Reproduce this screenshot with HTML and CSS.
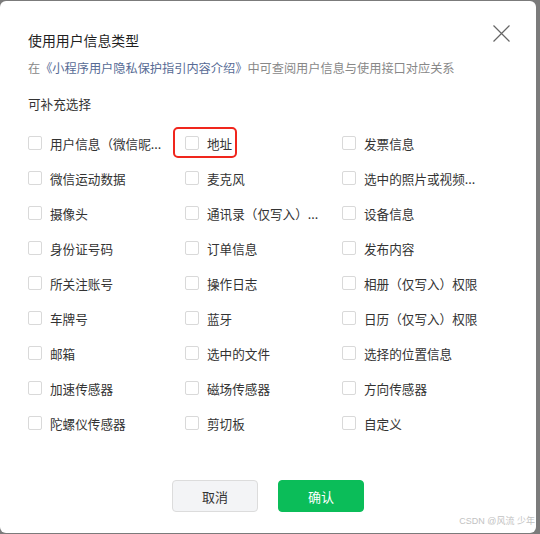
FILE: index.html
```html
<!DOCTYPE html>
<html lang="zh-CN">
<head>
<meta charset="utf-8">
<title>使用用户信息类型</title>
<link rel="stylesheet" href="styles.css">
</head>
<body>
<div class="dialog">
  <div class="title">使用用户信息类型</div>
  <button class="close" aria-label="关闭">
    <svg width="17" height="17" viewBox="0 0 17 17"><path d="M0.5 0.5L16.5 16.5M16.5 0.5L0.5 16.5" stroke="#666" stroke-width="1.2" fill="none"/></svg>
  </button>
  <div class="desc">在<span class="link">《小程序用户隐私保护指引内容介绍》</span>中可查阅用户信息与使用接口对应关系</div>
  <div class="label">可补充选择</div>
  <div class="grid">
    <div class="item"><span class="box"></span><span class="text">用户信息（微信昵...</span></div>
    <div class="item"><span class="box"></span><span class="text">地址</span><span class="mark"></span></div>
    <div class="item"><span class="box"></span><span class="text">发票信息</span></div>
    <div class="item"><span class="box"></span><span class="text">微信运动数据</span></div>
    <div class="item"><span class="box"></span><span class="text">麦克风</span></div>
    <div class="item"><span class="box"></span><span class="text">选中的照片或视频...</span></div>
    <div class="item"><span class="box"></span><span class="text">摄像头</span></div>
    <div class="item"><span class="box"></span><span class="text">通讯录（仅写入）...</span></div>
    <div class="item"><span class="box"></span><span class="text">设备信息</span></div>
    <div class="item"><span class="box"></span><span class="text">身份证号码</span></div>
    <div class="item"><span class="box"></span><span class="text">订单信息</span></div>
    <div class="item"><span class="box"></span><span class="text">发布内容</span></div>
    <div class="item"><span class="box"></span><span class="text">所关注账号</span></div>
    <div class="item"><span class="box"></span><span class="text">操作日志</span></div>
    <div class="item"><span class="box"></span><span class="text">相册（仅写入）权限</span></div>
    <div class="item"><span class="box"></span><span class="text">车牌号</span></div>
    <div class="item"><span class="box"></span><span class="text">蓝牙</span></div>
    <div class="item"><span class="box"></span><span class="text">日历（仅写入）权限</span></div>
    <div class="item"><span class="box"></span><span class="text">邮箱</span></div>
    <div class="item"><span class="box"></span><span class="text">选中的文件</span></div>
    <div class="item"><span class="box"></span><span class="text">选择的位置信息</span></div>
    <div class="item"><span class="box"></span><span class="text">加速传感器</span></div>
    <div class="item"><span class="box"></span><span class="text">磁场传感器</span></div>
    <div class="item"><span class="box"></span><span class="text">方向传感器</span></div>
    <div class="item"><span class="box"></span><span class="text">陀螺仪传感器</span></div>
    <div class="item"><span class="box"></span><span class="text">剪切板</span></div>
    <div class="item"><span class="box"></span><span class="text">自定义</span></div>
  </div>
  <div class="actions">
    <button class="btn cancel">取消</button>
    <button class="btn ok">确认</button>
  </div>
  <div class="watermark">CSDN @风流 少年</div>
</div>
</body>
</html>
```
FILE: styles.css
```css
html, body {
  margin: 0;
  padding: 0;
}
body {
  background: #7b7b7b;
  width: 540px;
  height: 534px;
  overflow: hidden;
  font-family: "Noto Sans CJK SC", "Noto Sans", sans-serif;
}
.dialog {
  position: relative;
  margin-top: 1px;
  width: 536px;
  height: 532px;
  background: #fff;
  border-radius: 6px;
  box-sizing: border-box;
  padding: 29px 0 0 28px;
}
.title {
  font-size: 13.9px;
  line-height: 20px;
  color: #1f1f1f;
}
.close {
  position: absolute;
  top: 24px;
  right: 26px;
  width: 17px;
  height: 17px;
  padding: 0;
  border: 0;
  background: none;
  display: block;
}
.close svg { display: block; }
.desc {
  margin-top: 9px;
  font-size: 12.2px;
  line-height: 18px;
  color: #888;
  white-space: nowrap;
}
.link { color: #576b95; }
.label {
  margin-top: 18px;
  font-size: 12.6px;
  line-height: 18px;
  color: #333;
}
.grid {
  margin-top: 12.5px;
  display: grid;
  grid-template-columns: 157px 157px 157px;
  grid-auto-rows: 35px;
}
.item {
  position: relative;
  display: flex;
  align-items: center;
  gap: 8px;
  font-size: 12.6px;
  color: #333;
  white-space: nowrap;
}
.box {
  width: 14px;
  height: 14px;
  box-sizing: border-box;
  border: 1px solid #d9d9d9;
  border-radius: 2px;
  flex: none;
}
.mark {
  position: absolute;
  left: -12px;
  top: 1px;
  width: 64px;
  height: 31px;
  box-sizing: border-box;
  border: 2px solid #f0261d;
  border-radius: 5px;
}
.actions {
  margin-top: 39.5px;
  margin-left: -28px;
  display: flex;
  justify-content: center;
  gap: 20px;
}
.btn {
  width: 86px;
  height: 32px;
  box-sizing: border-box;
  border-radius: 4px;
  font-family: inherit;
  font-size: 13px;
  padding: 0;
}
.cancel {
  background: #f3f4f6;
  border: 1px solid #dcdcdc;
  color: #333;
}
.ok {
  background: #0bbd59;
  border: 1px solid #0bbd59;
  color: #fff;
}
.watermark {
  position: absolute;
  right: 1px;
  bottom: 6px;
  font-family: "Liberation Sans", "Noto Sans CJK SC", sans-serif;
  font-size: 9px;
  line-height: 11px;
  color: #c2c2c2;
  white-space: nowrap;
}
```
